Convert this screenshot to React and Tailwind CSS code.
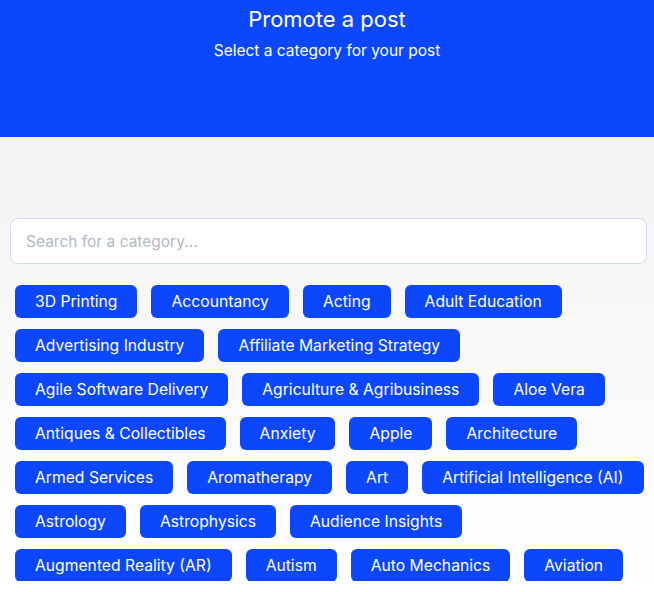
const categories = [
  '3D Printing',
  'Accountancy',
  'Acting',
  'Adult Education',
  'Advertising Industry',
  'Affiliate Marketing Strategy',
  'Agile Software Delivery',
  'Agriculture & Agribusiness',
  'Aloe Vera',
  'Antiques & Collectibles',
  'Anxiety',
  'Apple',
  'Architecture',
  'Armed Services',
  'Aromatherapy',
  'Art',
  'Artificial Intelligence (AI)',
  'Astrology',
  'Astrophysics',
  'Audience Insights',
  'Augmented Reality (AR)',
  'Autism',
  'Auto Mechanics',
  'Aviation',
];

const App = () => {
  return (
    <div className="h-[592px] w-full overflow-hidden bg-gradient-to-b from-[#eff0ee] to-white font-['Inter',sans-serif]">
      {/* Header */}
      <div className="h-[137px] bg-[#0c47fe] text-center text-white">
        <h1 className="pt-[5px] text-[22px] leading-[28px]">Promote a post</h1>
        <p className="mt-[8px] text-[15.5px] leading-[20px]">Select a category for your post</p>
      </div>

      <div className="pl-[10px] pr-[7px] pt-[81px]">
        <input
          type="text"
          placeholder="Search for a category..."
          className="h-[46px] w-full rounded-[8px] border border-[#cddcf5] bg-white px-[15px] text-[15.5px] text-gray-700 outline-none placeholder:text-[#b3b8c2]"
        />

        {/* Categories */}
        <div className="mt-[21px] h-[296px] overflow-hidden pl-[5px]">
          <div className="flex flex-wrap gap-x-[14px] gap-y-[11px]">
            {categories.map((c) => (
              <button
                key={c}
                className="h-[33px] rounded-[6px] bg-[#0c47fe] px-[20px] text-[15.7px] text-white"
              >
                {c}
              </button>
            ))}
          </div>
        </div>
      </div>
    </div>
  );
};

export default App;
